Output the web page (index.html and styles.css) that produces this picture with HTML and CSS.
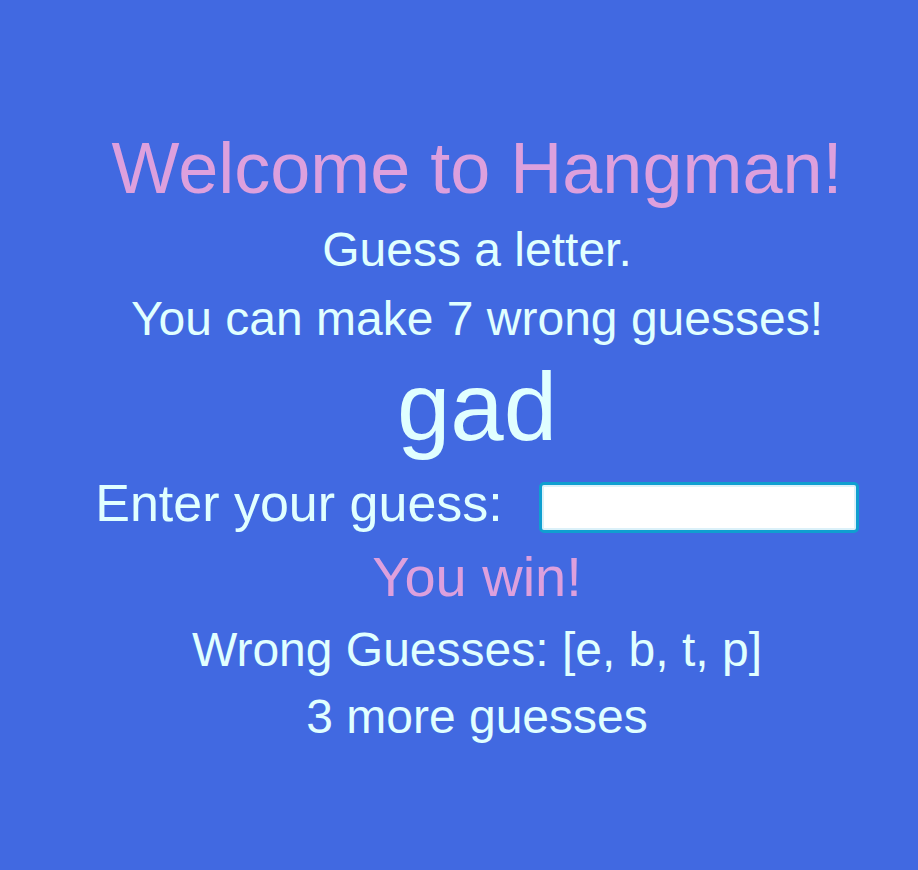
FILE: index.html
```html
<!DOCTYPE html>
<html lang="en">
<head>
<meta charset="utf-8">
<title>Hangman</title>
<link rel="stylesheet" href="styles.css">
</head>
<body>
<main class="game">
  <h1 class="title">Welcome to Hangman!</h1>
  <p class="line line-first">Guess a letter.</p>
  <p class="line">You can make 7 wrong guesses!</p>
  <div class="word">gad</div>
  <form class="guess-row" onsubmit="return false;">
    <label class="guess-label" for="guess">Enter your guess:</label>
    <input class="guess-input" id="guess" type="text" autocomplete="off">
  </form>
  <p class="result">You win!</p>
  <p class="line line-wrong">Wrong Guesses: [e, b, t, p]</p>
  <p class="line line-last">3 more guesses</p>
</main>
</body>
</html>
```

FILE: styles.css
```css
html, body {
  margin: 0;
  padding: 0;
  background: #4169e1;
  height: 100%;
}

body {
  font-family: "Liberation Sans", Arial, Helvetica, sans-serif;
  color: #e0ffff;
}

.game {
  display: flex;
  flex-direction: column;
  align-items: center;
  padding: 128px 0 0 36px;
  text-align: center;
}

.title {
  margin: 0;
  font-size: 72px;
  font-weight: normal;
  line-height: 80px;
  color: #dda0dd;
}

.line {
  margin: 0;
  font-size: 48px;
  line-height: 69px;
}

.line-first {
  margin-top: 7px;
}

.word {
  font-size: 96px;
  line-height: 104px;
  margin-top: 2px;
}

.guess-row {
  display: flex;
  align-items: flex-start;
  gap: 36px;
  margin: 9px 0 0;
}

.guess-label {
  font-size: 52px;
  line-height: 70px;
}

.guess-input {
  box-sizing: border-box;
  width: 320px;
  height: 51px;
  margin-top: 14px;
  border: 3px solid #0f9fd0;
  border-radius: 5px;
  background: #ffffff;
  box-shadow: inset 0 0 0 2px #dcf1f9;
  outline: none;
  padding: 0 8px;
  font-size: 24px;
}

.result {
  margin: 0;
  font-size: 56px;
  line-height: 78px;
  color: #dda0dd;
}

.line-wrong {
  line-height: 68px;
}

.line-last {
  line-height: 66px;
}
```
